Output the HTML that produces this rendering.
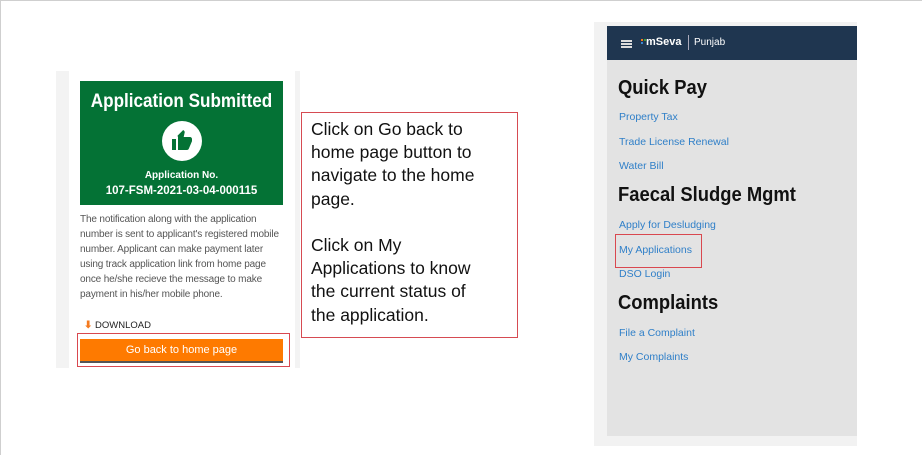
<!DOCTYPE html>
<html><head><meta charset="utf-8"><style>
*{margin:0;padding:0;box-sizing:border-box}
body{width:922px;height:455px;background:#fff;position:relative;overflow:hidden;font-family:"Liberation Sans",Arial,sans-serif}
.a{position:absolute}
.lk{position:absolute;left:619px;font-size:10.5px;color:#2f7fc8;white-space:nowrap}
.h{position:absolute;left:618px;font-size:20px;font-weight:bold;color:#111;white-space:nowrap;transform:scaleX(.92);transform-origin:left}
</style></head><body>
<div class="a" style="left:0;top:0;width:922px;height:1px;background:#cfcfcf"></div>
<div class="a" style="left:0;top:0;width:1px;height:455px;background:#cfcfcf"></div>

<!-- left card -->
<div class="a" style="left:56px;top:71px;width:244px;height:297px;background:#f3f3f3"></div>
<div class="a" style="left:69px;top:71px;width:226px;height:297px;background:#fff"></div>
<div class="a" style="left:80px;top:81px;width:203px;height:124px;background:#047235"></div>
<div class="a" style="left:70px;top:91px;width:223px;text-align:center;color:#fff;font-weight:bold;font-size:19px;transform:scaleX(.9)">Application Submitted</div>
<div class="a" style="left:162px;top:121px;width:40px;height:40px;border-radius:50%;background:#fff"></div>
<svg class="a" style="left:170px;top:129px" width="24" height="24" viewBox="0 0 24 24"><path fill="#047235" d="M2 10h4v11H2zM8 21h9c.8 0 1.5-.5 1.8-1.2l2.9-6.9c.1-.3.3-.6.3-.9v-2c0-1.1-.9-2-2-2h-6.3l1-4.6v-.3c0-.4-.2-.8-.4-1.1L13.2 1 7.6 6.6C7.2 7 8 7.5 8 8z"/></svg>
<div class="a" style="left:80px;top:170px;width:203px;text-align:center;color:#fff;font-weight:bold;font-size:10px">Application No.</div>
<div class="a" style="left:80px;top:185px;width:203px;text-align:center;color:#fff;font-weight:bold;font-size:11.5px">107-FSM-2021-03-04-000115</div>
<div class="a" style="left:80px;top:213px;width:205px;color:#555;font-size:10px;line-height:14.9px;letter-spacing:-.15px">The notification along with the application number is sent to applicant's registered mobile number. Applicant can make payment later using track application link from home page once he/she recieve the message to make payment in his/her mobile phone.</div>
<div class="a" style="left:84px;top:320px;color:#f47a1f;font-size:10px;font-weight:bold">&#x2B07;</div>
<div class="a" style="left:95px;top:320px;color:#222;font-size:9.5px">DOWNLOAD</div>
<div class="a" style="left:77px;top:333px;width:213px;height:34px;border:1.5px solid #d9484f"></div>
<div class="a" style="left:80px;top:339px;width:203px;height:24px;background:#fe7a00;border-bottom:2px solid #555;color:#fff;font-size:11px;text-align:center;line-height:22px">Go back to home page</div>

<!-- callout -->
<div class="a" style="left:301px;top:112px;width:217px;height:226px;border:1.5px solid #d64b52"></div>
<div class="a" style="left:311px;top:118px;width:205px;font-size:17.5px;line-height:23.2px;color:#111;white-space:nowrap">Click on Go back to<br>home page button to<br>navigate to the home<br>page.<br><br>Click on My<br>Applications to know<br>the current status of<br>the application.</div>

<!-- right phone -->
<div class="a" style="left:594px;top:22px;width:263px;height:424px;background:#f2f2f2"></div>
<div class="a" style="left:607px;top:26px;width:250px;height:410px;background:#e3e3e3"></div>
<div class="a" style="left:607px;top:26px;width:250px;height:34px;background:#1f3650"></div>
<div class="a" style="left:621px;top:40px;width:11px;height:2px;background:#ddd;box-shadow:0 3px 0 #ddd,0 6px 0 #ddd"></div>
<div class="a" style="left:641px;top:39px;width:2px;height:2px;background:#f47a1f;box-shadow:3px 0 0 #3a9d3a,0 3px 0 #3b88d0"></div>
<div class="a" style="left:646px;top:36px;color:#fff;font-weight:bold;font-size:11px">mSeva</div>
<div class="a" style="left:688px;top:35px;width:1px;height:15px;background:#aab"></div>
<div class="a" style="left:694px;top:37px;color:#fff;font-size:10px">Punjab</div>
<div class="h" style="top:77px">Quick Pay</div>
<div class="lk" style="top:111px">Property Tax</div>
<div class="lk" style="top:136px">Trade License Renewal</div>
<div class="lk" style="top:160px">Water Bill</div>
<div class="h" style="top:184px">Faecal Sludge Mgmt</div>
<div class="lk" style="top:219px">Apply for Desludging</div>
<div class="lk" style="top:244px">My Applications</div>
<div class="a" style="left:615px;top:234px;width:87px;height:34px;border:1.5px solid #d9484f"></div>
<div class="lk" style="top:268px">DSO Login</div>
<div class="h" style="top:292px">Complaints</div>
<div class="lk" style="top:327px">File a Complaint</div>
<div class="lk" style="top:351px">My Complaints</div>
</body></html>
